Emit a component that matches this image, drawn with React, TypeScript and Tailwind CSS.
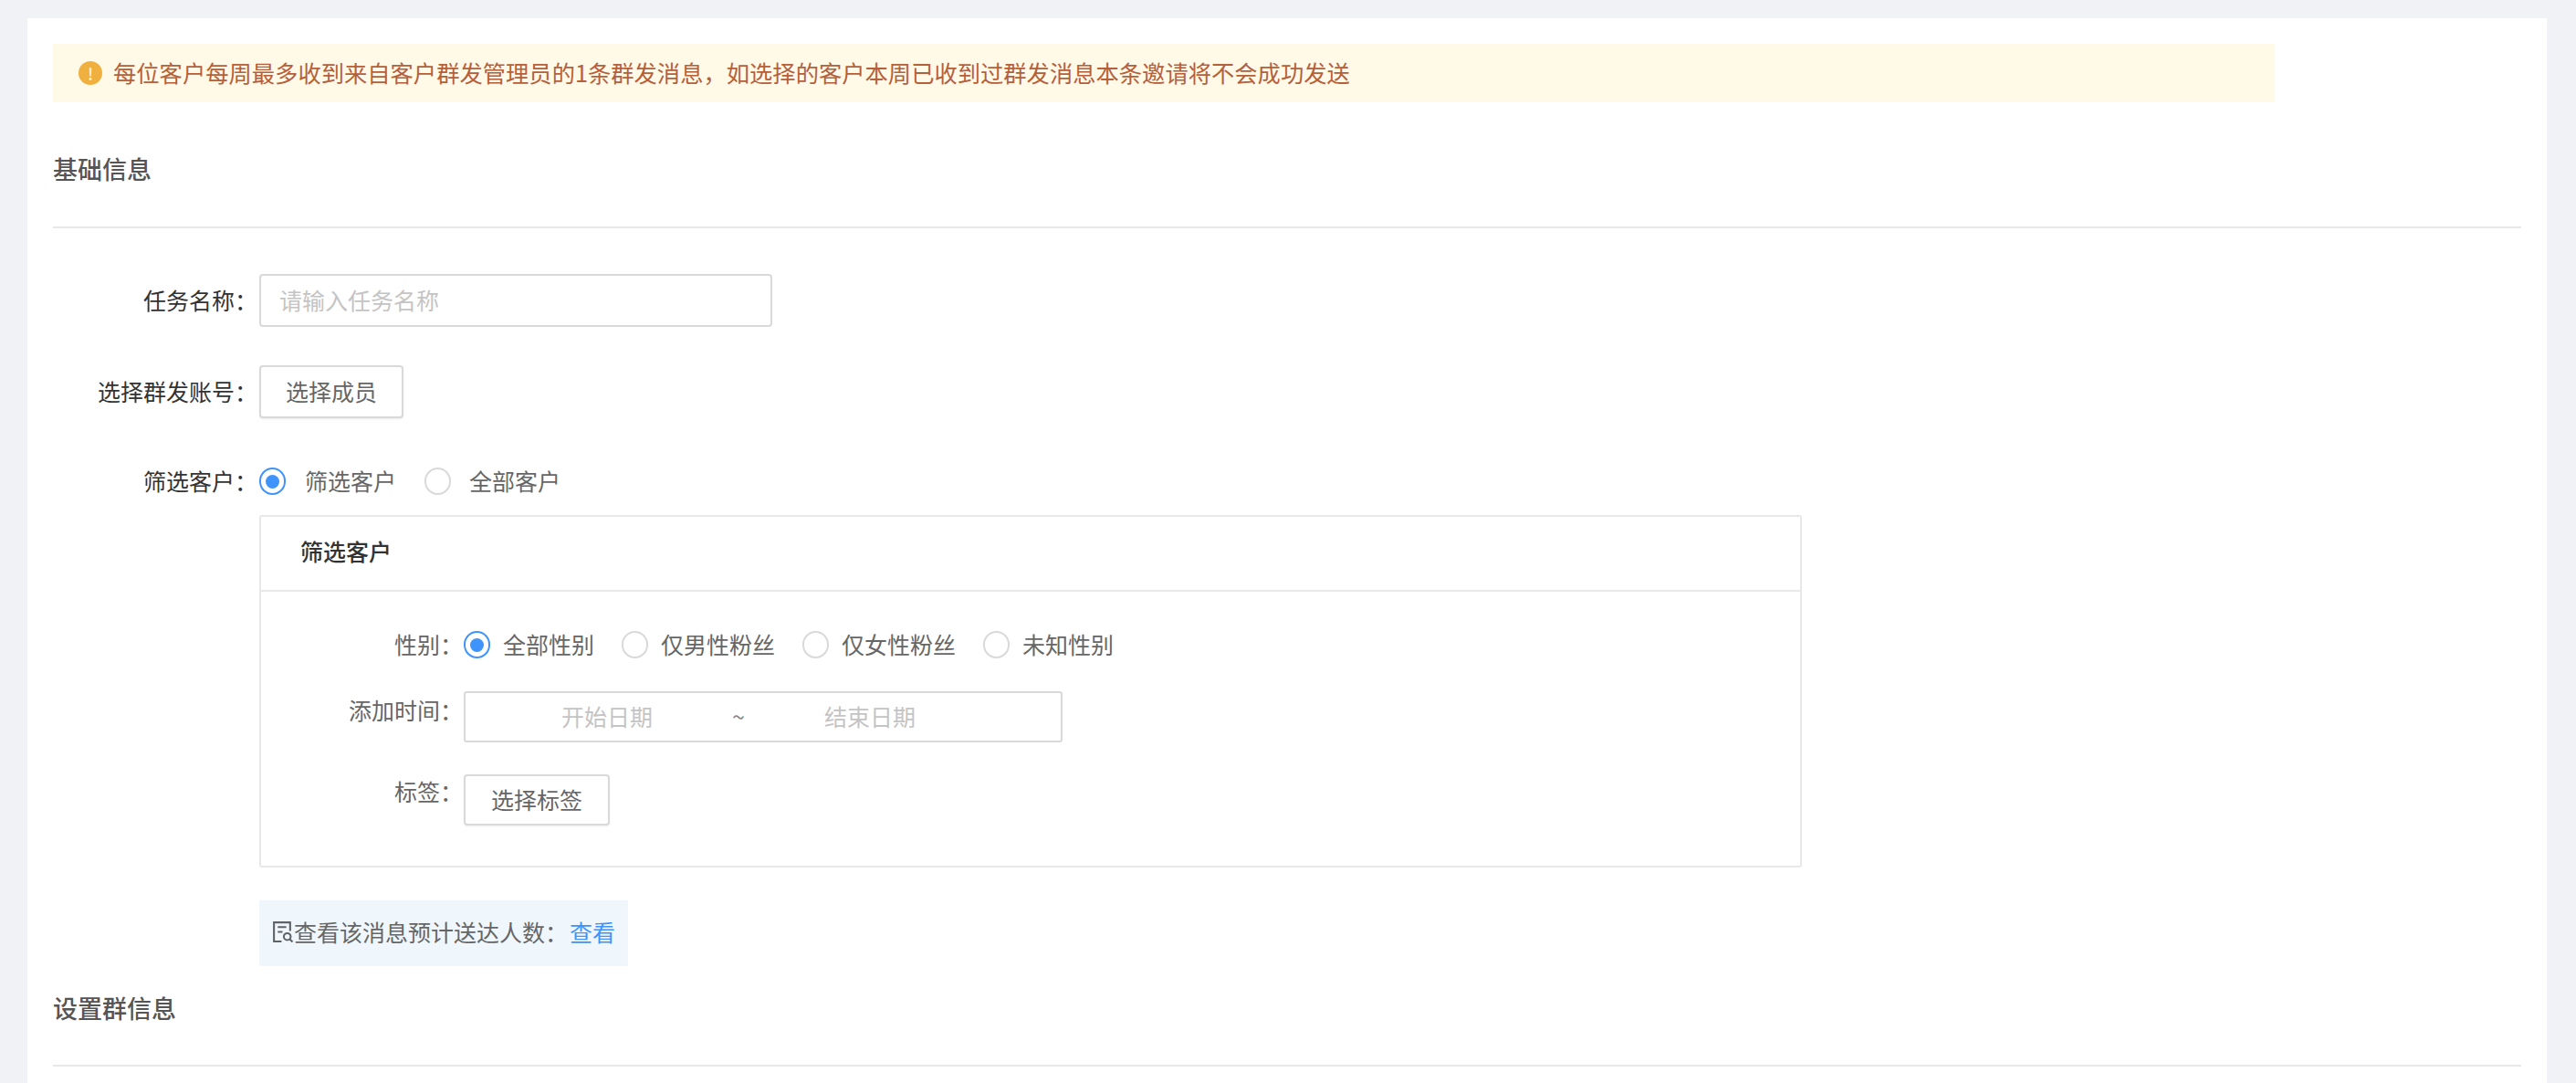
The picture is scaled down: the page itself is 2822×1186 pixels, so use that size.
import React from 'react';

const GENDERS = ['全部性别', '仅男性粉丝', '仅女性粉丝', '未知性别'];

const Radio: React.FC<{ checked?: boolean; label: string; labelGap: string; className?: string }> = ({ checked, label, labelGap, className }) => (
  <div className={`flex items-center ${className ?? ''}`}>
    <span
      className={`flex h-[30px] w-[29px] shrink-0 items-center justify-center rounded-full border-2 ${
        checked ? 'border-[#3f94fb]' : 'border-[#d9d9d9]'
      }`}
    >
      {checked && <span className="h-[15px] w-[15px] rounded-full bg-[#3f94fb]" />}
    </span>
    <span className={`${labelGap} pb-[2px] text-[#666666]`}>{label}</span>
  </div>
);

const SectionTitle: React.FC<{ title: string; className: string }> = ({ title, className }) => (
  <h2 className={`flex items-center border-b-2 border-[#e8e8e8] text-[27px] font-medium text-[#555555] ${className}`}>{title}</h2>
);

const FormLabel: React.FC<{ text: string }> = ({ text }) => (
  <label className="w-[226px] shrink-0 pb-[2px] pr-[2px] text-right text-[#333333]">{text}：</label>
);

const OutlineButton: React.FC<{ text: string; className: string }> = ({ text, className }) => (
  <button className={`h-[58px] rounded-[4px] border-2 border-[#d9d9d9] bg-white pb-[2px] text-[#666666] shadow-[0_1px_2px_rgba(0,0,0,0.08)] ${className}`}>
    {text}
  </button>
);

export default function App() {
  return (
    <div
      className="h-[1186px] overflow-hidden bg-[#f0f2f5] pl-[30px] pr-[32px] pt-[20px] text-[25px] leading-[36px]"
      style={{ fontFamily: '"Noto Sans CJK SC", "Noto Sans", sans-serif' }}
    >
      <div className="h-full bg-white px-[28px] pt-[28px]">
        <div className="flex h-[64px] w-[2434px] items-center bg-[#fff9e8] pl-[28px] text-[#b5603a]">
          <span className="flex h-[26px] w-[26px] shrink-0 items-center justify-center rounded-full bg-[#f0b040] text-[18px] font-medium leading-none text-[#fff3d6]">!</span>
          <span className="ml-[12px] pb-[3px] text-[25.3px]">每位客户每周最多收到来自客户群发管理员的1条群发消息，如选择的客户本周已收到过群发消息本条邀请将不会成功发送</span>
        </div>

        <SectionTitle title="基础信息" className="h-[138px] pt-[10px]" />

        <div className="mt-[50px] flex items-center">
          <FormLabel text="任务名称" />
          <div className="flex h-[58px] w-[562px] items-center rounded-[4px] border-2 border-[#d9d9d9] pb-[2px] pl-[20px] text-[#c4c4c4]">请输入任务名称</div>
        </div>

        <div className="mt-[42px] flex items-center">
          <FormLabel text="选择群发账号" />
          <OutlineButton text="选择成员" className="w-[158px]" />
        </div>

        <div className="mt-[50px] flex items-center">
          <FormLabel text="筛选客户" />
          <Radio checked label="筛选客户" labelGap="ml-[21px]" />
          <Radio label="全部客户" labelGap="ml-[20px]" className="ml-[31px]" />
        </div>

        <div className="ml-[226px] mt-[18px] h-[386px] w-[1690px] rounded-[3px] border-2 border-[#e8e8e8]">
          <div className="flex h-[82px] items-center border-b-2 border-[#e8e8e8] pb-[6px] pl-[43px] font-medium text-[#333333]">筛选客户</div>

          <div className="mt-[39px] flex items-center">
            <span className="w-[221px] pb-[2px] text-right text-[#666666]">性别：</span>
            <div className="ml-[1px] flex">
              {GENDERS.map((g, i) => (
                <Radio key={g} checked={i === 0} label={g} labelGap="ml-[14px]" className={i === 0 ? '' : 'ml-[30px]'} />
              ))}
            </div>
          </div>

          <div className="mt-[32px] flex items-start">
            <span className="mt-[2px] w-[221px] text-right text-[#666666]">添加时间：</span>
            <div className="ml-[1px] grid h-[56px] w-[656px] grid-cols-[1fr_auto_1fr] items-center rounded-[3px] border-2 border-[#d9d9d9] pb-[2px] pl-[18px] pr-[72px] text-center text-[#c4c4c4]">
              <span>开始日期</span>
              <span className="text-[#888888]">~</span>
              <span>结束日期</span>
            </div>
          </div>

          <div className="mt-[35px] flex items-start">
            <span className="w-[221px] text-right text-[#666666]">标签：</span>
            <OutlineButton text="选择标签" className="ml-[1px] !h-[56px] w-[160px]" />
          </div>
        </div>

        <div className="ml-[226px] mt-[36px] flex h-[72px] w-[404px] items-center bg-[#eff7fd] pb-[4px] pl-[13px] text-[#666666]">
          <svg viewBox="0 0 24 24" className="h-[25px] w-[25px] shrink-0" fill="none" stroke="#5f6366" strokeWidth="2">
            <path d="M20 11V2H3v20h8" />
            <path d="M7 7h9M7 12h5" />
            <circle cx="17" cy="17" r="3.6" />
            <path d="M19.6 19.6 22.5 22.5" />
          </svg>
          <span>查看该消息预计送达人数：</span>
          <a className="ml-[2px] text-[#3f94fb]">查看</a>
        </div>

        <SectionTitle title="设置群信息" className="h-[110px] pb-[16px]" />
      </div>
    </div>
  );
}
